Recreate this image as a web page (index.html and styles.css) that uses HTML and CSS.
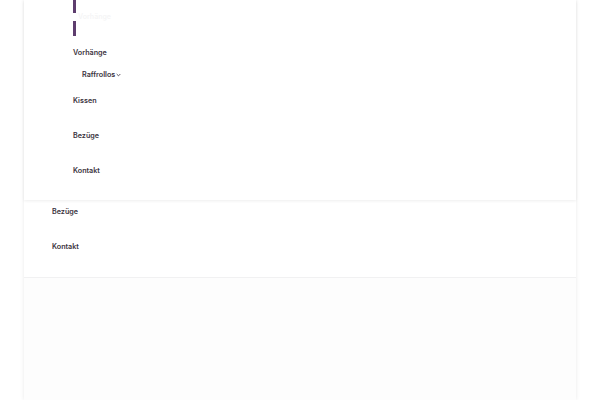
FILE: index.html
```html
<!DOCTYPE html>
<html lang="de">
<head>
<meta charset="utf-8">
<title>Menü</title>
<link rel="stylesheet" href="styles.css">
</head>
<body>
<div class="page">
  <div class="submenu">
    <div class="bar bar-top"></div>
    <div class="ghost">Vorhänge</div>
    <div class="bar bar-mid"></div>
    <div class="item first">Vorhänge</div>
    <div class="item sub">Raffrollos<svg class="chev" viewBox="0 0 6 4" width="5" height="4"><path d="M0.8 0.8 L3 3 L5.2 0.8" fill="none" stroke="#3b3340" stroke-width="1"/></svg></div>
    <div class="item kissen">Kissen</div>
    <div class="item gap">Bezüge</div>
    <div class="item gap">Kontakt</div>
  </div>
  <div class="outer-list">
    <div class="item o-first">Bezüge</div>
    <div class="item gap">Kontakt</div>
  </div>
</div>
</body>
</html>
```
FILE: styles.css
```css
html, body {
  margin: 0;
  padding: 0;
  background: #ffffff;
}
body {
  font-family: Inter, "Liberation Sans", sans-serif;
  color: #3b3340;
  overflow: hidden;
}
.page {
  margin: 0 24px;
  height: 400px;
  background: #fdfdfd;
  box-shadow: 0 0 4px rgba(0, 0, 0, 0.09);
}
.submenu {
  background: #ffffff;
  padding: 0 0 24px 49px;
  box-shadow: 0 1px 3px rgba(0, 0, 0, 0.07);
  position: relative;
}
.bar {
  width: 3px;
  background: #5e3d6e;
}
.bar-top {
  height: 13px;
}
.bar-mid {
  height: 15px;
}
.ghost {
  font-size: 7px;
  line-height: 8px;
  height: 8px;
  padding-left: 5px;
  color: #f5f5f6;
  font-weight: 600;
}
.item {
  box-sizing: border-box;
  font-size: 7.2px;
  line-height: 10px;
  height: 12px;
  padding-top: 2px;
  font-weight: 600;
  display: flex;
  align-items: center;
}
.first {
  margin-top: 10px;
}
.sub {
  margin-top: 10px;
  padding-left: 9px;
}
.chev {
  margin-left: 1px;
}
.kissen {
  margin-top: 14px;
}
.gap {
  margin-top: 23px;
}
.outer-list {
  background: #ffffff;
  padding: 5px 0 25px 28px;
  border-bottom: 1px solid #f1f1f2;
}
```
